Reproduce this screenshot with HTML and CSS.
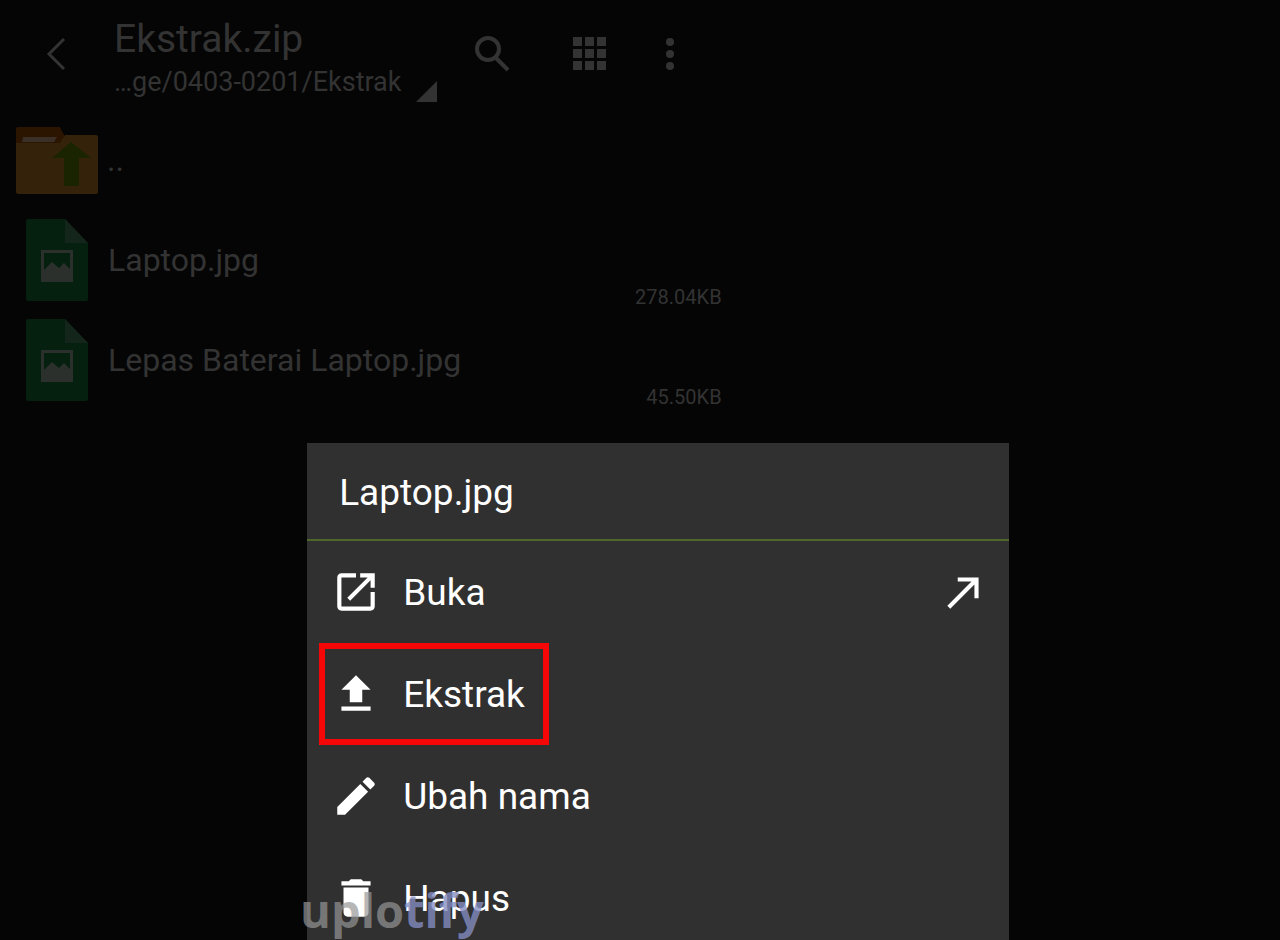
FILE: index.html
```html
<!DOCTYPE html>
<html lang="id">
	<head>
		<meta charset="UTF-8">
		<title>Ekstrak.zip</title>
		<link rel="stylesheet" href="styles.css">
	</head>

	<body>
		<div class="topbar">
			<button class="back" aria-label="Kembali">
				<svg width="24" height="36" viewBox="0 0 24 36"><path d="M22 3L7 18l15 15" fill="none" stroke="currentColor" stroke-width="3"/></svg>
			</button>
			<button class="place">
				<span class="names">
					<span class="title">Ekstrak.zip</span>
					<span class="path">…ge/0403-0201/Ekstrak</span>
				</span>
				<svg width="21" height="21" viewBox="0 0 21 21"><path d="M21 0v21H0z" fill="currentColor"/></svg>
			</button>
			<div class="tools">
				<button class="find" aria-label="Cari">
					<svg width="40" height="40" viewBox="0 0 40 40" fill="none" stroke="currentColor"><circle cx="16" cy="15" r="11" stroke-width="4"/><path d="M24 24l12 12" stroke-width="4"/></svg>
				</button>
				<button aria-label="Tampilan">
					<svg width="40" height="40" viewBox="0 0 40 40" fill="currentColor"><path d="M3 3h9v9H3zM15 3h9v9h-9zM27 3h9v9h-9zM3 15h9v9H3zM15 15h9v9h-9zM27 15h9v9h-9zM3 27h9v9H3zM15 27h9v9h-9zM27 27h9v9h-9z"/></svg>
				</button>
				<button aria-label="Lainnya">
					<svg width="20" height="40" viewBox="0 0 20 40" fill="currentColor"><circle cx="10" cy="8" r="4"/><circle cx="10" cy="20" r="4"/><circle cx="10" cy="32" r="4"/></svg>
				</button>
			</div>
		</div>

		<ul class="files">
			<li class="up">
				<svg width="84" height="70" viewBox="0 0 84 70">
					<path d="M1 20V4q0-2 2-2h42l4 8v10z" fill="#2b1400"/>
					<path d="M1 18h44l5-8h31q2 0 2 2v55q0 2-2 2H3q-2 0-2-2z" fill="#35220a"/>
					<path d="M8 12h34l-3 5H7z" fill="#3a3028"/>
					<path d="M56 17l20 16H64v28H49V33H37z" fill="#1a2400"/>
				</svg>
				<span class="name">..</span>
			</li>
			<li>
				<svg width="62" height="82" viewBox="0 0 62 82">
					<path d="M2 0h37l23 24v56q0 2-2 2H2q-2 0-2-2V2q0-2 2-2z" fill="#062010"/>
					<path d="M39 0l23 24H39z" fill="#14261b"/>
					<path d="M15 31h32v32H15zM18 34v17l8-8 7 6 5-5 6 6V34z" fill="#2b302c" fill-rule="evenodd"/>
				</svg>
				<span class="name">Laptop.jpg</span>
				<span class="size">278.04KB</span>
			</li>
			<li>
				<svg width="62" height="82" viewBox="0 0 62 82">
					<path d="M2 0h37l23 24v56q0 2-2 2H2q-2 0-2-2V2q0-2 2-2z" fill="#062010"/>
					<path d="M39 0l23 24H39z" fill="#14261b"/>
					<path d="M15 31h32v32H15zM18 34v17l8-8 7 6 5-5 6 6V34z" fill="#2b302c" fill-rule="evenodd"/>
				</svg>
				<span class="name">Lepas Baterai Laptop.jpg</span>
				<span class="size">45.50KB</span>
			</li>
		</ul>

		<div class="menu">
			<h2>Laptop.jpg</h2>
			<div class="row">
				<button class="item">
					<svg viewBox="0 0 24 24"><path d="M19 19H5V5h7V3H5C3.900 3 3 3.900 3 5v14c0 1.100.9 2 2 2h14c1.100 0 2-.9 2-2v-7h-2zM14 3v2h3.600L7.800 14.800l1.400 1.400L19 6.400V10h2V3z"/></svg>
					Buka
				</button>
				<button class="open" aria-label="Buka dengan">
					<svg viewBox="0 0 24 24"><path d="M9 5v2h6.600L4 18.600 5.400 20 17 8.400V15h2V5z"/></svg>
				</button>
			</div>
			<div class="row">
				<button class="item on">
					<svg viewBox="0 0 24 24"><path d="M9 16h6v-6h4l-7-7-7 7h4zM5 18h14v2H5z"/></svg>
					Ekstrak
				</button>
			</div>
			<div class="row">
				<button class="item">
					<svg viewBox="0 0 24 24"><path d="M3 17.250V21h3.750L17.810 9.940l-3.750-3.750zM20.710 7.040c.39-.39.39-1.020 0-1.410l-2.340-2.340c-.39-.39-1.020-.39-1.410 0l-1.830 1.830 3.750 3.750z"/></svg>
					Ubah nama
				</button>
			</div>
			<div class="row">
				<button class="item">
					<svg viewBox="0 0 24 24"><path d="M6 19c0 1.100.9 2 2 2h8c1.100 0 2-.9 2-2V7H6zM19 4h-3.500l-1-1h-5l-1 1H5v2h14z"/></svg>
					Hapus
				</button>
			</div>
		</div>

		<div class="mark">uplo<span>tify</span></div>
	</body>
</html>
```
FILE: styles.css
```css
* {
	box-sizing: border-box;
}

body {
	margin: 0;
	min-height: 100vh;
	position: relative;
	overflow: hidden;
	background: #050505;
	color: #333;
	font-family: Roboto, "Liberation Sans", sans-serif;
}

button {
	display: flex;
	align-items: center;
	margin: 0;
	padding: 0;
	border: 0;
	background: none;
	color: inherit;
	font: inherit;
	text-align: left;
}

svg {
	flex: none;
}

.topbar {
	display: flex;
	align-items: center;
	height: 108px;
	padding-left: 42px;
}

.back {
	width: 72px;
}

.place {
	align-items: flex-end;
	gap: 15px;
	padding-top: 10px;
}

.names {
	display: flex;
	flex-direction: column;
}

.title {
	font-size: 39px;
	line-height: 46px;
}

.path {
	font-size: 27px;
	line-height: 40px;
}

.tools {
	display: flex;
	gap: 50px;
	padding-left: 35px;
}

.find {
	margin-right: 8px;
}

.files {
	width: 57%;
	margin: 0;
	padding: 2px 8px 0 26px;
	list-style: none;
}

.files li {
	display: flex;
	align-items: center;
	gap: 20px;
	height: 100px;
}

.files .up {
	gap: 8px;
	margin-left: -11px;
}

.name {
	flex: 1;
	font-size: 32px;
}

.size {
	align-self: flex-end;
	font-size: 20px;
	line-height: 26px;
}

.menu {
	position: absolute;
	top: 443px;
	left: 24%;
	width: 54.8%;
	background: #303030;
	color: #fff;
	font-size: 37px;
}

.menu h2 {
	margin: 0;
	padding: 4px 32px 0;
	border-bottom: 2px solid #50672c;
	font-size: 37px;
	font-weight: 400;
	line-height: 92px;
}

.menu svg {
	width: 50px;
	height: 50px;
	fill: #fff;
}

.row {
	display: flex;
	justify-content: space-between;
	padding: 0 20px 0 12px;
}

.item {
	gap: 22px;
	height: 102px;
	padding: 0 18px 0 6px;
	border: 6px solid transparent;
}

.on {
	border-color: #f60606;
}

.mark {
	position: absolute;
	top: 882px;
	left: 300px;
	color: rgba(150, 150, 150, 0.7);
	font: 700 47px/56px "Open Sans", "Noto Sans", sans-serif;
}

.mark span {
	color: rgba(132, 142, 196, 0.8);
}
```
